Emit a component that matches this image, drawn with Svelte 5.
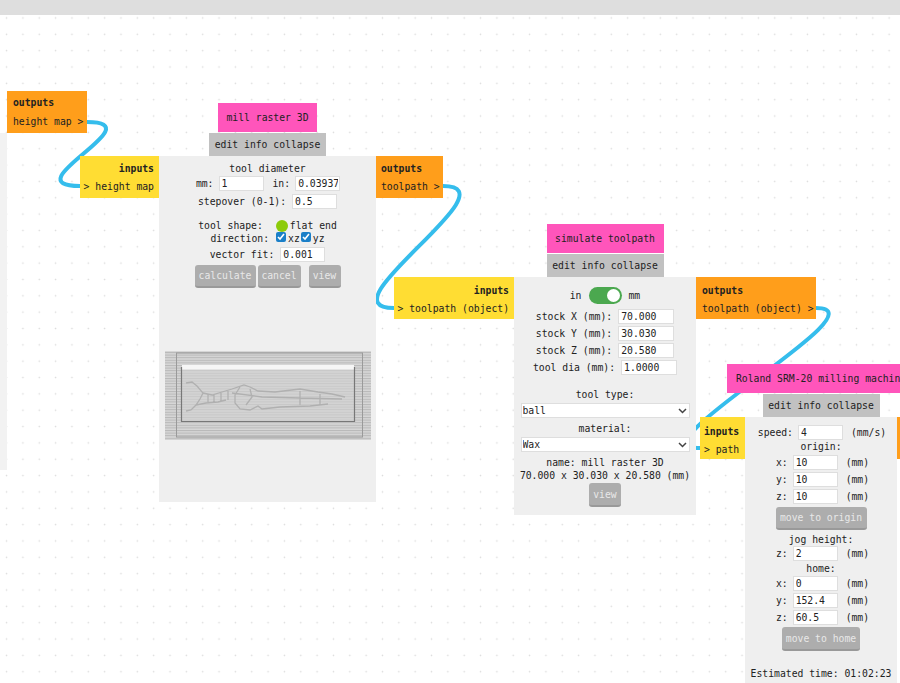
<script>
  const guitar = "M186 382 L192 381 L197 385 L203 392 L200 398 L196 404 L191 409 L186 410 M203 392 L212 394 L222 391 L232 388 L244 384 L250 386 L258 390 L275 391 L300 388 L318 391 L332 393 L345 396 M196 404 L206 402 L218 401 L226 399 M240 386 L235 394 L235 402 L240 408 L250 409 L258 405 L262 408 L280 406 L310 405 L328 403 M208 393 L208 401 M214 393 L214 401 M221 392 L221 400 M228 390 L228 399 M250 388 L252 396 L246 404 M300 390 L300 404 M320 393 L320 404 M232 392 L262 396 L300 397 L342 398";
</script>

<div class="canvas">
  <div class="topbar"></div>
  <div class="strip"></div>

  <svg class="wires" width="900" height="683" viewBox="0 0 900 683" aria-hidden="true">
    <path d="M87 122 C156 122 10 186 80 186" />
    <path d="M443 186 C516 186 320 308 394 308" />
    <path d="M816 308 C888 308 628 448 700 448" />
  </svg>

  <div class="node source">
    <div class="port out">
      <b>outputs</b>
      <span>height map &gt;</span>
    </div>
  </div>

  <div class="node raster">
    <div class="port in">
      <b>inputs</b>
      <span>&gt; height map</span>
    </div>
    <div class="column">
      <div class="title">mill raster 3D</div>
      <div class="bar">edit info collapse</div>
      <div class="panel">
        <div class="line">tool diameter</div>
        <div class="row r1"><span>mm:</span><input class="w45" value="1" /><span class="sp">in:</span><input class="w45" value="0.03937" /></div>
        <div class="row r2"><span>stepover (0-1):</span><input class="w45" value="0.5" /></div>
        <div class="row r3"><span>tool shape:</span><i class="dot"></i><span>flat end</span></div>
        <div class="row r4"><span>direction:</span><input type="checkbox" checked /><span>xz</span><input type="checkbox" checked /><span>yz</span></div>
        <div class="row r5"><span>vector fit:</span><input class="w45" value="0.001" /></div>
        <div class="row r6">
          <button class="b-calc">calculate</button>
          <button class="b-cancel">cancel</button>
          <button class="b-view">view</button>
        </div>
        <svg class="raster-img" width="206" height="89" viewBox="165 350 206 89" aria-hidden="true">
          <defs>
            <pattern id="hatch" width="4" height="2.6" patternUnits="userSpaceOnUse">
              <rect width="4" height="2.6" fill="#d6d6d6" />
              <rect width="4" height="1" fill="#b8b8b8" />
            </pattern>
          </defs>
          <rect x="165" y="350" width="206" height="89" fill="url(#hatch)" />
          <rect x="176.500" y="352" width="186" height="84" fill="none" stroke="#9a9a9a" />
          <rect x="182" y="364" width="172" height="56" fill="#d2d2d2" />
          <rect x="182" y="364" width="172" height="56" fill="url(#hatch)" opacity="0.4" />
          <rect x="182" y="364" width="172" height="4.500" fill="#f6f6f6" />
          <path d="M181.500 366 V420.500 H354.500 V366" fill="none" stroke="#777" stroke-width="1.200" />
          <path d={guitar} fill="none" stroke="#b0b0b0" stroke-width="1.300" />
        </svg>
      </div>
    </div>
    <div class="port out narrow">
      <b>outputs</b>
      <span>toolpath &gt;</span>
    </div>
  </div>

  <div class="node sim">
    <div class="port in wide">
      <b>inputs</b>
      <span>&gt; toolpath (object)</span>
    </div>
    <div class="column">
      <div class="title t-sim">simulate toolpath</div>
      <div class="bar">edit info collapse</div>
      <div class="panel p-sim">
        <div class="row s0"><span>in</span><i class="toggle"><i class="knob"></i></i><span>mm</span></div>
        <div class="row s1"><span>stock X (mm):</span><input class="w56" value="70.000" /></div>
        <div class="row s1"><span>stock Y (mm):</span><input class="w56" value="30.030" /></div>
        <div class="row s1"><span>stock Z (mm):</span><input class="w56" value="20.580" /></div>
        <div class="row s1"><span>tool dia (mm):</span><input class="w56" value="1.0000" /></div>
        <div class="line s2">tool type:</div>
        <div class="sel">
          <select><option>ball</option></select>
          <svg width="9" height="6" viewBox="0 0 9 6" aria-hidden="true"><path d="M1 1 L4.500 4.500 L8 1" /></svg>
        </div>
        <div class="line s3">material:</div>
        <div class="sel">
          <select><option>Wax</option></select>
          <svg width="9" height="6" viewBox="0 0 9 6" aria-hidden="true"><path d="M1 1 L4.500 4.500 L8 1" /></svg>
        </div>
        <div class="line s4">name: mill raster 3D</div>
        <div class="line s5">70.000 x 30.030 x 20.580 (mm)</div>
        <button class="b-view s6">view</button>
      </div>
    </div>
    <div class="port out wide">
      <b>outputs</b>
      <span>toolpath (object) &gt;</span>
    </div>
  </div>

  <div class="node roland">
    <div class="port in tiny">
      <b>inputs</b>
      <span>&gt; path</span>
    </div>
    <div class="column c-rol">
      <div class="title t-rol"><span>Roland SRM-20 milling machine</span></div>
      <div class="bar">edit info collapse</div>
      <div class="panel p-rol">
        <div class="row m0"><span>speed:</span><input class="w45" value="4" /><span class="unit">(mm/s)</span></div>
        <div class="line m1">origin:</div>
        <div class="row m2"><span>x:</span><input class="w45" value="10" /><span class="unit">(mm)</span></div>
        <div class="row m2"><span>y:</span><input class="w45" value="10" /><span class="unit">(mm)</span></div>
        <div class="row m2"><span>z:</span><input class="w45" value="10" /><span class="unit">(mm)</span></div>
        <button class="m3">move to origin</button>
        <div class="line m4">jog height:</div>
        <div class="row m2 m5"><span>z:</span><input class="w45" value="2" /><span class="unit">(mm)</span></div>
        <div class="line m8">home:</div>
        <div class="row m2"><span>x:</span><input class="w45" value="0" /><span class="unit">(mm)</span></div>
        <div class="row m2"><span>y:</span><input class="w45" value="152.4" /><span class="unit">(mm)</span></div>
        <div class="row m2"><span>z:</span><input class="w45" value="60.5" /><span class="unit">(mm)</span></div>
        <button class="m6">move to home</button>
        <div class="line m7">Estimated time: 01:02:23</div>
      </div>
    </div>
    <div class="port out stub"></div>
  </div>
</div>

<style>
  :global(body) {
    margin: 0;
    overflow: hidden;
  }
  .canvas {
    position: relative;
    width: 900px;
    height: 683px;
    overflow: hidden;
    color: #222;
    font: 9.75px/13px "DejaVu Sans Mono", monospace;
    background-color: #fff;
    background-image: radial-gradient(circle at center, #dadada 0, #e2e2e2 0.7px, transparent 1.1px);
    background-size: 16.35px 16.35px;
    background-position: -1.6px 9.8px;
  }
  .topbar {
    height: 15px;
    background: #dedede;
  }
  .strip {
    position: absolute;
    left: 0;
    top: 133px;
    width: 7px;
    height: 337px;
    background: #f2f2f2;
  }
  .wires {
    position: absolute;
    left: 0;
    top: 0;
  }
  .wires path {
    fill: none;
    stroke: #35bdec;
    stroke-width: 4px;
  }
  .node {
    position: absolute;
    display: flex;
    align-items: flex-start;
  }
  .source { left: 7px; top: 91px; }
  .raster { left: 80px; top: 103px; }
  .sim { left: 394px; top: 224px; }
  .roland { left: 700px; top: 364px; }

  .port {
    box-sizing: border-box;
    display: flex;
    flex-direction: column;
    width: 79px;
    height: 42px;
    margin-top: 53px;
    padding: 6px 6px 0;
    gap: 5px;
    flex: none;
    white-space: nowrap;
  }
  .port b { font-weight: 700; }
  .source .port { margin-top: 0; width: 80px; padding-top: 5px; gap: 6px; }
  .in { background: #ffdd33; align-items: flex-end; padding-left: 2px; padding-right: 5px; }
  .out { background: #ff9e1b; padding-right: 2px; }
  .narrow { width: 67px; padding-left: 5px; }
  .sim .port { padding-top: 7px; }
  .in.wide { width: 120px; }
  .out.wide { width: 120px; }
  .in.tiny { width: 45px; padding: 8px 3px 0 4px; align-items: flex-start; }
  .stub { width: 20px; }

  .column {
    display: flex;
    flex-direction: column;
    align-items: center;
    flex: none;
  }
  .c-rol { width: 152px; }
  .title {
    box-sizing: border-box;
    height: 29px;
    width: 99px;
    margin-bottom: 1px;
    display: flex;
    align-items: center;
    justify-content: center;
    background: #ff55bb;
    white-space: nowrap;
    flex: none;
  }
  .t-sim { width: 117px; }
  .t-rol {
    width: 173px;
    margin-left: -18px;
    align-self: flex-start;
    justify-content: flex-start;
    padding-left: 9px;
    overflow: hidden;
  }
  .bar {
    box-sizing: border-box;
    width: 117px;
    height: 23px;
    display: flex;
    align-items: center;
    justify-content: center;
    background: #c1c1c1;
    white-space: nowrap;
  }
  .panel {
    box-sizing: border-box;
    width: 217px;
    height: 346px;
    background: #efefef;
    display: flex;
    flex-direction: column;
    align-items: center;
    padding-top: 6px;
  }
  .p-sim { width: 182px; height: 238px; padding-top: 10px; }
  .p-rol { width: 152px; height: 266px; padding-top: 8px; }

  .line { white-space: nowrap; }
  .row {
    display: flex;
    align-items: center;
    justify-content: center;
    white-space: nowrap;
    gap: 6px;
  }
  input:not([type]) {
    box-sizing: border-box;
    height: 15px;
    padding: 0 1px 0 2px;
    border: 1px solid #dedede;
    background: #fff;
    color: #222;
    font: inherit;
    outline: none;
    flex: none;
  }
  input[type="checkbox"] {
    width: 10px;
    height: 10px;
    margin: -3px 2px 0 1px;
    accent-color: #1a7fc8;
    flex: none;
  }
  .w45 { width: 45px; }
  .w56 { width: 56px; }

  .r1 { margin-top: 1px; height: 15px; gap: 5px; margin-left: 1px; }
  .r1 .sp { margin-left: 4px; }
  .r2 { margin-top: 2px; height: 16px; }
  .r3 { margin-top: 10px; height: 13px; gap: 0; }
  .r3 span:first-child { margin-right: 13px; }
  .dot {
    width: 12px;
    height: 12px;
    margin-right: 2px;
    border-radius: 50%;
    background: #8ccb0a;
  }
  .r4 { height: 13px; gap: 0; }
  .r4 span:first-child { margin-right: 6px; }
  .r5 { margin-top: 2px; height: 15px; }
  .r6 { margin-top: 3px; gap: 0; align-items: flex-start; }

  button {
    box-sizing: border-box;
    height: 23px;
    padding: 0;
    border: 0;
    border-bottom: 2px solid #999;
    border-radius: 3px;
    background: #adadad;
    color: #e8e8e8;
    font: inherit;
  }
  .b-calc { width: 61px; }
  .b-cancel { width: 43px; margin-left: 2px; }
  .b-view { width: 32px; margin-left: 8px; }
  .raster-img {
    display: block;
    margin-top: 63px;
    filter: blur(0.4px);
  }

  .s0 { height: 17px; gap: 5px; margin-bottom: 4px; }
  .toggle {
    position: relative;
    display: block;
    width: 33px;
    height: 17px;
    margin: 0 2px;
    border-radius: 9px;
    background: #4ba84f;
  }
  .knob {
    position: absolute;
    right: 2px;
    top: 2px;
    width: 13px;
    height: 13px;
    border-radius: 50%;
    background: #fff;
  }
  .s1 { height: 17px; margin-top: 0; }
  .s2 { margin-top: 12px; margin-bottom: 2px; }
  .s3 { margin-top: 4px; margin-bottom: 2px; }
  .sel {
    position: relative;
    width: 169px;
    height: 15px;
    flex: none;
  }
  .sel svg {
    position: absolute;
    right: 3px;
    top: 5px;
  }
  .sel path {
    fill: none;
    stroke: #444;
    stroke-width: 1.500;
  }
  select {
    box-sizing: border-box;
    display: block;
    width: 100%;
    height: 15px;
    padding: 0 0 0 1px;
    border: 1px solid #dedede;
    border-radius: 0;
    background: #fff;
    color: #222;
    font: inherit;
    appearance: none;
  }
  .s4 { margin-top: 4px; }
  .s5 { margin-top: 0; }
  .s6 { margin: 1px 0 0; height: 24px; }

  .m0 { height: 15px; gap: 5px; margin-left: 2px; }
  .m0 .unit { margin-left: 3px; }
  .m1 { height: 14px; }
  .m8 { height: 13px; margin-top: 1px; }
  .m2 { height: 17px; gap: 5px; margin-left: 3px; }
  .m2 .unit { margin-left: 3px; }
  .m3 { width: 91px; height: 23px; margin-top: 2px; }
  .m4 { margin-top: 3px; height: 12px; }
  .m5 { height: 16px; }
  .m6 { width: 78px; height: 24px; margin-top: 1px; }
  .m7 { margin-top: 16px; }
</style>
